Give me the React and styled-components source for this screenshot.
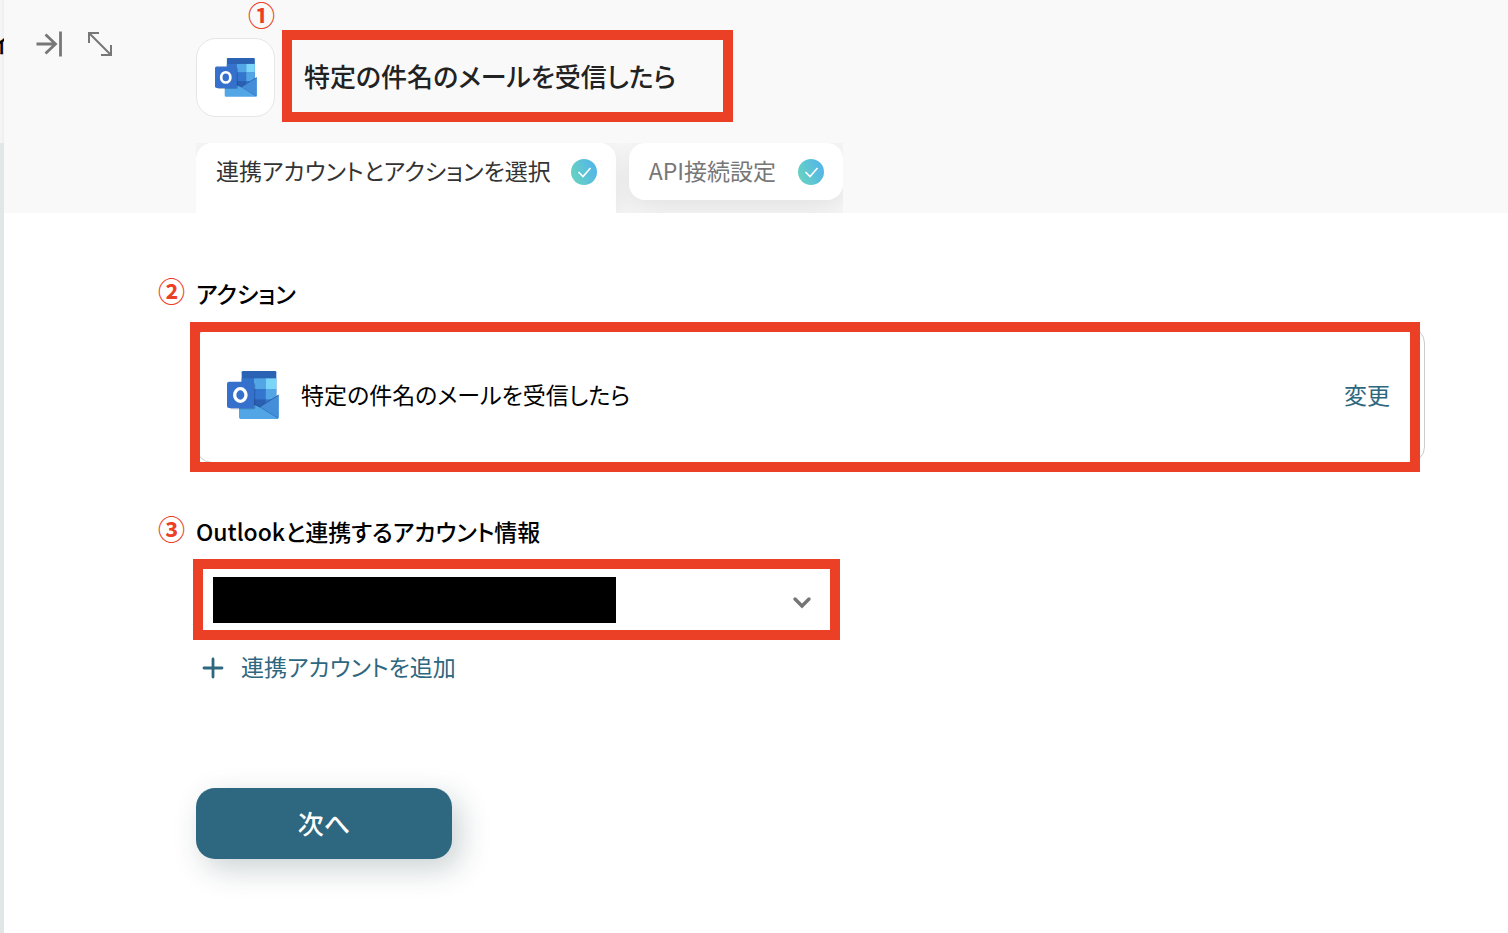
import { useState } from "react";
import styled, { createGlobalStyle, ThemeProvider } from "styled-components";

const theme = {
  primary: "#2e6780",
  mark: "#eb4026",
  header: "#f9f9f9",
  text: "#000",
  icon: "#777",
};

const GlobalStyle = createGlobalStyle`
  * {
    box-sizing: border-box;
  }

  body {
    margin: 0;
    background: #fff;
    color: ${theme.text};
    font-family: "Noto Sans CJK JP", "Noto Sans", sans-serif;
    font-size: 23px;
    font-feature-settings: "palt";
  }

  button,
  select {
    font: inherit;
    font-feature-settings: inherit;
  }
`;

const Page = styled.div`
  display: flex;
  min-height: 100vh;
`;

const Backdrop = styled.aside`
  flex: none;
  display: flex;
  flex-direction: column;
  width: 4px;
  overflow: hidden;
  background: #e1e7e7;
`;

const BackdropBar = styled.div`
  display: flex;
  justify-content: center;
  height: 143px;
  padding: 26px 4px 0 0;
  background: linear-gradient(to right, #f7f7f7, #eeeeee);
  line-height: 34px;
  font-weight: 500;
  white-space: nowrap;
`;

const Panel = styled.div`
  flex: 1;
  min-width: 0;
`;

const Header = styled.header`
  display: flex;
  background: ${({ theme }) => theme.header};
`;

const Tools = styled.div`
  flex: none;
  display: flex;
  align-items: flex-start;
  gap: 24px;
  width: 192px;
  padding: 30px 0 0 31px;
`;

const IconButton = styled.button`
  display: flex;
  border: none;
  padding: 0;
  cursor: pointer;
  background: none;
  color: ${({ theme }) => theme.icon};
`;

const HeaderMain = styled.div`
  flex: 1;
  min-width: 0;
  padding-top: 30px;
`;

const TitleRow = styled.div`
  display: flex;
  align-items: flex-start;
  gap: 7px;
`;

const AppTile = styled.div`
  position: relative;
  display: flex;
  align-items: center;
  justify-content: center;
  width: 79px;
  height: 79px;
  margin-top: 8px;
  border: 1px solid #e6e6e6;
  border-radius: 20px;
  background: #fff;
`;

const Step = styled.span`
  position: absolute;
  top: ${({ $top }) => $top}px;
  left: ${({ $left }) => $left}px;
  color: ${({ theme }) => theme.mark};
  font-size: 27px;
  font-weight: 700;
  line-height: 30px;
`;

const Title = styled.h1`
  display: flex;
  align-items: center;
  min-width: 451px;
  height: 92px;
  margin: 0;
  border: 10px solid ${({ theme }) => theme.mark};
  padding: 0 12px 2px;
  color: #222;
  font-size: 26px;
  font-weight: 500;
`;

const Tabs = styled.nav`
  display: inline-flex;
  align-items: flex-start;
  gap: 13px;
  height: 70px;
  margin-top: 21px;
  overflow: hidden;
  vertical-align: top;
  background: #f6f6f6;
`;

const Tab = styled.button`
  display: flex;
  align-items: center;
  justify-content: space-between;
  gap: 20px;
  min-width: 214px;
  height: ${({ $active }) => ($active ? 70 : 57)}px;
  border: none;
  border-radius: ${({ $active }) => ($active ? "16px 16px 0 0" : "16px")};
  padding: 0 19px ${({ $active }) => ($active ? 13 : 0)}px 20px;
  cursor: pointer;
  box-shadow: 0 8px 24px rgba(0, 0, 0, 0.08);
  background: #fff;
  color: ${({ $active }) => ($active ? "#333" : "#777")};
  white-space: nowrap;
`;

const Text = styled.span`
  padding-bottom: 3px;
`;

const Main = styled.main`
  padding: 64px 83px 64px 192px;
`;

const Section = styled.section`
  position: relative;
`;

const Label = styled.label`
  display: block;
  font-weight: 500;
  line-height: 32px;
`;

const Card = styled.div`
  position: relative;
  display: flex;
  align-items: center;
  gap: 22px;
  height: 136px;
  margin: 18px 0 52px;
  border: 1px solid #ccc;
  border-radius: 16px;
  padding: 0 34px 0 30px;
`;

const CardMark = styled.div`
  position: absolute;
  inset: -6px 4px -10px -7px;
  border: 10px solid ${({ theme }) => theme.mark};
  pointer-events: none;
`;

const TextButton = styled.button`
  display: flex;
  align-items: center;
  gap: 17px;
  border: none;
  padding: 0;
  cursor: pointer;
  background: none;
  color: ${({ theme }) => theme.primary};
  line-height: 34px;
`;

const ChangeButton = styled(TextButton)`
  margin-left: auto;
`;

const AddButton = styled(TextButton)`
  margin: 9px 0 0 6px;
`;

const SelectBox = styled.div`
  position: relative;
  display: flex;
  align-items: center;
  width: 647px;
  max-width: 100%;
  height: 81px;
  margin: 12px 0 0 -3px;
  border: 10px solid ${({ theme }) => theme.mark};

  svg {
    position: absolute;
    right: 18px;
    pointer-events: none;
  }
`;

const Select = styled.select`
  width: 100%;
  height: 100%;
  border: none;
  outline: none;
  appearance: none;
  padding: 0 48px 0 16px;
  cursor: pointer;
  background: transparent;
`;

const Redaction = styled.div`
  position: absolute;
  top: 8px;
  left: 10px;
  width: 403px;
  height: 46px;
  background: #000;
  pointer-events: none;
`;

const NextButton = styled.button`
  display: block;
  width: 256px;
  height: 71px;
  margin-top: 102px;
  border: none;
  border-radius: 19px;
  padding: 0 0 2px;
  cursor: pointer;
  box-shadow: 8px 10px 30px rgba(20, 50, 60, 0.22);
  background: ${({ theme }) => theme.primary};
  color: #fff;
  font-size: 26px;
  font-weight: 500;
`;

const OutlookIcon = ({ width }) => (
  <svg width={width} viewBox="0 0 156 145" aria-hidden="true">
    <path d="M48 0h96q4 0 4 4v100H44V4q0-4 4-4z" fill="#2b62b4" />
    <path d="M44 22h37v32H44z" fill="#3373cc" />
    <path d="M81 22h35v32H81z" fill="#52a6e6" />
    <path d="M116 22h32v32h-32z" fill="#7ad5f9" />
    <path d="M44 54h37v50H44z" fill="#2b5fb2" />
    <path d="M81 54h35v32H81z" fill="#3475ce" />
    <path d="M116 54h32v32h-32z" fill="#52a6e6" />
    <path d="M81 86h35v22H81z" fill="#2b5fb2" />
    <path d="M116 86h32v22h-32z" fill="#3475ce" />
    <path d="M36 80l62 28 57-36v67q0 5-5 5H41q-5 0-5-5z" fill="#52a6e6" />
    <path d="M98 108l57-36v66q0 3-2 5z" fill="#448dd9" />
    <path d="M80 98l18 10 57-36" fill="none" stroke="#20468f" strokeWidth="2" />
    <path d="M98 108l55 33" fill="none" stroke="#2f6fba" strokeWidth="2" />
    <rect x="8" y="36" width="77" height="79" rx="6" fill="#123b75" opacity=".35" />
    <rect y="32" width="81" height="79" rx="6" fill="#3470cc" />
    <ellipse cx="40" cy="72" rx="17" ry="19" fill="none" stroke="#fff" strokeWidth="10" />
  </svg>
);

const CheckIcon = () => (
  <svg width="26" height="26" viewBox="0 0 26 26" aria-hidden="true">
    <defs>
      <linearGradient id="check" x1="0" y1="0.7" x2="1" y2="0.3">
        <stop offset="0" stopColor="#68d3c0" />
        <stop offset="1" stopColor="#52b4ea" />
      </linearGradient>
    </defs>
    <circle cx="13" cy="13" r="13" fill="url(#check)" />
    <path d="M7.5 13l4.5 4.5L19.5 9" fill="none" stroke="#fff" strokeWidth="1.6" />
  </svg>
);

const CollapseIcon = () => (
  <svg width="28" height="28" viewBox="0 0 28 28" fill="none" stroke="currentColor" strokeWidth="2.8" aria-hidden="true">
    <path d="M1.500 14H21M10.500 4.500L20.500 14l-10 9.500" />
    <path d="M25.500 1.500v25" />
  </svg>
);

const ExpandIcon = () => (
  <svg width="26" height="28" viewBox="0 0 26 28" fill="none" stroke="currentColor" strokeWidth="2" aria-hidden="true">
    <path d="M2 3l22 22M2 13V3h10M24 15v10H14" />
  </svg>
);

const PlusIcon = () => (
  <svg width="22" height="22" viewBox="0 0 22 22" fill="none" stroke="currentColor" strokeWidth="2.8" strokeLinecap="round" aria-hidden="true">
    <path d="M11 2v18M2 11h18" />
  </svg>
);

const ChevronIcon = () => (
  <svg width="20" height="18" viewBox="0 0 20 18" fill="none" stroke="#757575" strokeWidth="3.4" strokeLinecap="round" aria-hidden="true">
    <path d="M3 8l7 7 7-7" />
  </svg>
);

const tabs = ["連携アカウントとアクションを選択", "API接続設定"];

const App = () => {
  const [active, setActive] = useState(0);

  return (
    <ThemeProvider theme={theme}>
      <GlobalStyle />
      <Page>
        <Backdrop>
          <BackdropBar>イ</BackdropBar>
        </Backdrop>
        <Panel>
          <Header>
            <Tools>
              <IconButton type="button" aria-label="閉じる">
                <CollapseIcon />
              </IconButton>
              <IconButton type="button" aria-label="拡大">
                <ExpandIcon />
              </IconButton>
            </Tools>
            <HeaderMain>
              <TitleRow>
                <AppTile>
                  <OutlookIcon width={42} />
                  <Step $top={-39} $left={51}>①</Step>
                </AppTile>
                <Title>特定の件名のメールを受信したら</Title>
              </TitleRow>
              <Tabs>
                {tabs.map((tab, i) => (
                  <Tab key={tab} type="button" $active={i === active} onClick={() => setActive(i)}>
                    <Text>{tab}</Text>
                    <CheckIcon />
                  </Tab>
                ))}
              </Tabs>
            </HeaderMain>
          </Header>
          <Main>
            <Section>
              <Step $top={-1} $left={-38}>②</Step>
              <Label as="div">アクション</Label>
              <Card>
                <OutlookIcon width={52} />
                <Text>特定の件名のメールを受信したら</Text>
                <ChangeButton type="button">
                  <Text>変更</Text>
                </ChangeButton>
                <CardMark />
              </Card>
            </Section>
            <Section>
              <Step $top={-1} $left={-38}>③</Step>
              <Label htmlFor="account">Outlookと連携するアカウント情報</Label>
              <SelectBox>
                <Select id="account" />
                <Redaction />
                <ChevronIcon />
              </SelectBox>
              <AddButton type="button">
                <PlusIcon />
                <Text>連携アカウントを追加</Text>
              </AddButton>
            </Section>
            <NextButton type="button">次へ</NextButton>
          </Main>
        </Panel>
      </Page>
    </ThemeProvider>
  );
};

export default App;
